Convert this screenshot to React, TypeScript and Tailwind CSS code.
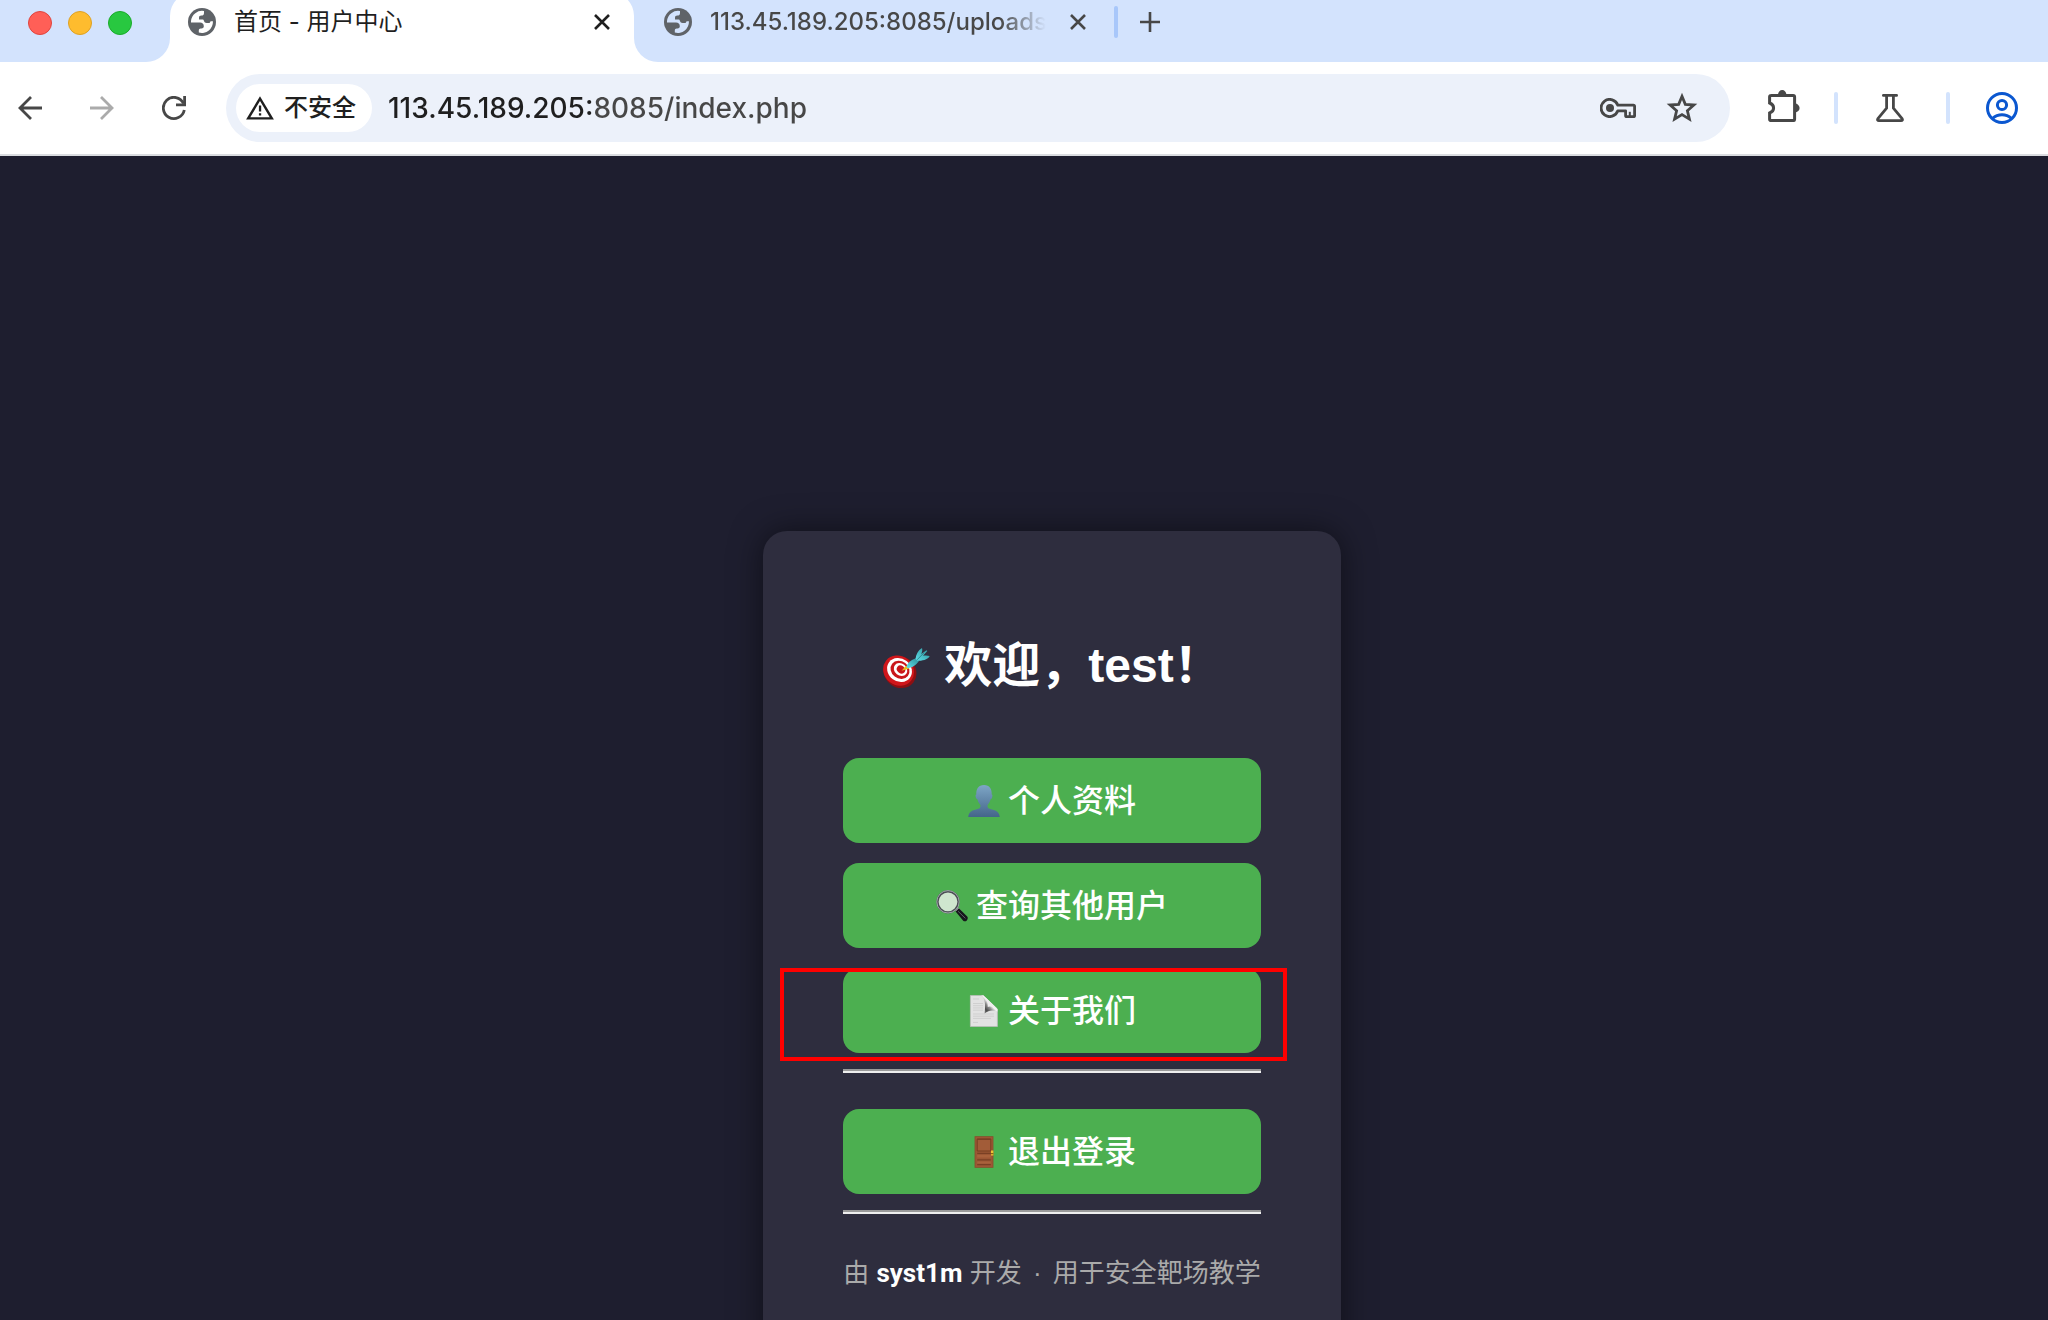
import type { ReactNode } from "react";

const Globe = () => (
  <svg viewBox="0 0 28 28" className="size-7 shrink-0" aria-hidden="true">
    <circle cx="14" cy="14" r="14" fill="#5f6368" />
    <path
      d="M3 13A11.1 11.1 0 0 1 16 3v2c0 1.8-1 2.6-2.600 2.600-1.600 0-2.400.8-2.400 2.300v1.600h3.500c1 0 1.300.6 1.500 1.500.3 1.300 1.200 2 2.600 2h2.200c1 0 1.500-1 1.800-1.800h2.300A11.1 11.1 0 0 1 10.800 24.600v-2.200c0-1.300.7-2 2-2h.8c1.400 0 2.200-.9 2.200-2.200 0-2.400-1.500-3.600-3.800-3.600H3z"
      fill="currentColor"
    />
  </svg>
);

const CloseIcon = () => (
  <svg viewBox="0 0 16 16" className="size-4" fill="none" stroke="currentColor" strokeWidth="2.600" aria-hidden="true">
    <path d="M1 1l14 14M15 1L1 15" />
  </svg>
);

const ArrowIcon = ({ flip }: { flip?: boolean }) => (
  <svg viewBox="0 0 24 24" className={flip ? "size-6 rotate-180" : "size-6"} fill="none" stroke="currentColor" strokeWidth="2.800" aria-hidden="true">
    <path d="M24 12H2M13 1L2 12l11 11" />
  </svg>
);

const ReloadIcon = () => (
  <svg viewBox="0 0 24 24" className="size-6" fill="none" stroke="currentColor" strokeWidth="2.800" aria-hidden="true">
    <path d="M22.300 14A10.600 10.600 0 1 1 21.500 7.400" />
    <path d="M22.600 0v8.800H14" />
  </svg>
);

const WarningIcon = () => (
  <svg viewBox="0 0 28 24" className="h-6 w-7" aria-hidden="true">
    <path d="M14 2.600L25.800 22.400H2.200z" fill="none" stroke="#1f1f1f" strokeWidth="2.400" />
    <path d="M12.900 9.500h2.300v6h-2.300zM12.900 17.300h2.300v2.300h-2.300z" fill="#1f1f1f" />
  </svg>
);

const KeyIcon = () => (
  <svg viewBox="0 0 36 20" className="h-5 w-9" fill="none" stroke="#474747" strokeWidth="2.800" aria-hidden="true">
    <path d="M17.800 7.200A8.600 8.600 0 1 0 17.800 12.800H25.600V17.400Q25.600 18.600 26.800 18.600H33.400Q34.600 18.600 34.600 17.400V8.400Q34.600 7.200 33.400 7.200z" strokeLinejoin="round" />
    <path d="M29.800 18v-4.200" strokeWidth="2" />
    <circle cx="10" cy="10" r="4" fill="#474747" stroke="none" />
  </svg>
);

const StarIcon = () => (
  <svg viewBox="0 0 32 32" className="size-8" fill="none" stroke="#474747" strokeWidth="2.800" aria-hidden="true">
    <path d="M16 4.300L19.300 12.300L27.900 13L21.400 18.700L23.400 27.100L16 22.600L8.600 27.100L10.600 18.700L4.100 13L12.700 12.300z" />
  </svg>
);

const PuzzleIcon = () => (
  <svg viewBox="0 0 32 32" className="size-8" aria-hidden="true">
    <path
      d="M3.400 5.400H25.200Q26.600 5.400 26.600 6.800V29.200Q26.600 30.600 25.200 30.600H3Q1.600 30.600 1.600 29.200V23Q5.600 21.600 5.600 18T1.600 13V6.800Q1.600 5.400 3.400 5.400z"
      fill="none"
      stroke="#474747"
      strokeWidth="3"
    />
    <path d="M10 5a4.200 5 0 0 1 8.400 0zM27 13.600a4.600 4.400 0 0 1 0 8.800z" fill="#474747" />
  </svg>
);

const FlaskIcon = () => (
  <svg viewBox="0 0 28 28" className="size-7" fill="none" stroke="#474747" strokeWidth="2.800" strokeLinecap="round" strokeLinejoin="round" aria-hidden="true">
    <path d="M7.400 1.400H20.600M10.600 1.600V14.200L1.900 24.600Q.8 26.600 3 26.600H25Q27.200 26.600 26.100 24.600L17.400 14.200V1.600" />
  </svg>
);

const ProfileIcon = () => (
  <svg viewBox="0 0 32 32" className="size-8" fill="none" stroke="#0b57d0" strokeWidth="3" aria-hidden="true">
    <circle cx="16" cy="16" r="14.500" />
    <circle cx="16" cy="13" r="4.600" />
    <path d="M6.600 26.400Q10.600 22.800 16 22.800T25.400 26.400" />
  </svg>
);

const TargetEmoji = () => (
  <svg viewBox="0 0 48 48" className="size-12" aria-hidden="true">
    <defs>
      <linearGradient id="dart" x1="0" y1="1" x2="1" y2="0">
        <stop offset="0" stopColor="#5fe0ea" />
        <stop offset="1" stopColor="#2b8f98" />
      </linearGradient>
    </defs>
    <ellipse cx="18" cy="30" rx="17" ry="15.500" transform="rotate(38 18 30)" fill="#8d0f12" />
    <ellipse cx="16.600" cy="28.600" rx="16" ry="14.500" transform="rotate(38 16.600 28.600)" fill="#d0161b" />
    <ellipse cx="17.500" cy="28" rx="13" ry="11.400" transform="rotate(38 17.500 28)" fill="#fff" />
    <ellipse cx="18" cy="27.800" rx="10" ry="8.600" transform="rotate(38 18 27.800)" fill="#c9161b" />
    <ellipse cx="18.500" cy="27.600" rx="7.200" ry="6" transform="rotate(38 18.500 27.600)" fill="#fff" />
    <ellipse cx="19" cy="27.500" rx="4.500" ry="3.700" transform="rotate(38 19 27.500)" fill="#c9161b" />
    <g transform="translate(0 5) scale(1 .83)">
      <path d="M19.500 28.500L24 22.500l3.500 3.500z" fill="#e9b81c" />
      <path d="M24.500 24C25 19.500 29 15.500 34 13.500l3 3.500C34.500 21.500 30.500 25 26 25.500z" fill="url(#dart)" />
      <path d="M33.500 14.500C34 9 36 4 40 1.200c.6 2.400.2 4.600-.8 7.200L44.500 4l.8.8L41 10.500c2.200-.6 4.600-.6 6.600.4-.6 3.200-6 6.200-12.100 5.700z" fill="url(#dart)" />
      <path d="M35 15.500L42 7" stroke="#1f7078" strokeWidth=".8" />
    </g>
  </svg>
);

const PersonEmoji = () => (
  <svg viewBox="0 0 32 32" className="size-8" aria-hidden="true">
    <defs>
      <linearGradient id="bust" x1="0" y1="0" x2="0" y2="1">
        <stop offset="0" stopColor="#7ea6c6" />
        <stop offset="1" stopColor="#44658a" />
      </linearGradient>
    </defs>
    <path
      d="M16 0C10.500 0 8 4 8.300 9.500c-1 .2-.8 1.600-.4 3 .3 1 .8 1.700 1.500 1.700.5 2.200 1.500 4 2.800 5.200.6 1.600.2 3.400-1.200 4.200C7.500 25.500 1 24.500.2 32h31.600c-.8-7.500-7.300-6.500-10.800-8.400-1.400-.8-1.800-2.600-1.200-4.200 1.300-1.200 2.300-3 2.800-5.200.7 0 1.200-.7 1.500-1.700.4-1.400.6-2.800-.4-3C24 4 21.500 0 16 0z"
      fill="url(#bust)"
    />
  </svg>
);

const SearchEmoji = () => (
  <svg viewBox="0 0 32 32" className="size-8" aria-hidden="true">
    <path d="M18.800 19.500L21.500 17l4 4-2.800 2.800z" fill="#b5b9bd" />
    <path d="M19.600 21.400l3.300-3.100L31.200 26.500c1 1.200.6 2.800-.4 3.900s-2.600 1.300-3.600.3z" fill="#17181c" />
    <path d="M22 21.200l7.400 7.200" stroke="#5c5f66" strokeWidth="1" />
    <circle cx="12" cy="11.800" r="10.500" fill="#cfe6cf" stroke="#4b4e54" strokeWidth="2.200" />
    <circle cx="12" cy="11.800" r="11.200" fill="none" stroke="#b4babf" strokeWidth=".8" />
  </svg>
);

const PageEmoji = () => (
  <svg viewBox="0 0 32 32" className="size-8" aria-hidden="true">
    <defs>
      <linearGradient id="curl" x1="0" y1="1" x2="1" y2="0">
        <stop offset="0" stopColor="#a6a6a6" />
        <stop offset=".26" stopColor="#4a4a4a" />
        <stop offset=".42" stopColor="#8f8f8f" />
        <stop offset=".54" stopColor="#f4f4f4" />
      </linearGradient>
    </defs>
    <path d="M2.400.4h13L29.400 14v17.600h-27z" fill="#e2e2e2" stroke="#bdbdbd" strokeWidth=".8" />
    <path d="M5 4h6M5 8.500h10M5 10.700h10M5 12.900h10M5 15.100h10M5 19h21M5 21.200h21M5 23.400h18M5 27.400h5" stroke="#cfcfcf" strokeWidth="1" />
    <path d="M13 .4C17.400 3.500 17.600 9.500 16.600 18.400c4-3.600 8.800-3.600 12.800-1.800V14L15.400.4z" fill="url(#curl)" />
    <path d="M16.200 1.200L28.600 13.200C25.600 11.600 22.600 11.200 19.800 12 19.800 8 18.800 4 16.200 1.200z" fill="#eeeeee" />
  </svg>
);

const DoorEmoji = () => (
  <svg viewBox="0 0 32 32" className="size-8" aria-hidden="true">
    <path d="M6.600.2h18.800v31.600H6.600z" fill="#8a4b2b" />
    <path d="M7.400 1h17.200v30H7.400z" fill="#9c5734" />
    <path d="M9.200 3h13.600v12H9.200z" fill="#a25c38" stroke="#6d371d" strokeWidth=".8" />
    <path d="M9.200 3.400h13.600M9.200 17.400h13.600M9.200 23.800h13.600M9.200 28.600h13.600" stroke="#7a4024" strokeWidth="1.200" />
    <path d="M9.200 19h13.600v2.600H9.200zM9.200 25.400h13.600v2.200H9.200z" fill="#a9623c" />
    <path d="M23 14.500h2.400v5H23z" fill="#f1c232" />
    <path d="M23 17h2.400v1.200H23z" fill="#8a6412" />
  </svg>
);

const MenuLink = ({ href, icon, children }: { href: string; icon: ReactNode; children: ReactNode }) => (
  <a href={href} className="flex h-[85px] items-center justify-center gap-2 rounded-2xl bg-[#4caf50] text-[32px] leading-none font-medium text-white">
    {icon}
    <span>{children}</span>
  </a>
);

const Rule = () => <hr className="h-1 border-t-2 border-b-2 border-t-[#9a9a9a] border-b-[#eeeeee]" />;

const TabStrip = () => (
  <div className="flex h-[62px] shrink-0 overflow-hidden bg-white text-2xl leading-8 text-[#474747]">
    <div className="flex w-[170px] shrink-0 gap-4 rounded-br-3xl bg-[#d3e3fd] pt-[11px] pl-7">
      <button aria-label="关闭" className="size-6 rounded-full border border-[#e0443e] bg-[#ff5f57]" />
      <button aria-label="最小化" className="size-6 rounded-full border border-[#dea123] bg-[#febc2e]" />
      <button aria-label="缩放" className="size-6 rounded-full border border-[#1aab29] bg-[#28c840]" />
    </div>
    <div className="w-[464px] shrink-0 bg-[linear-gradient(#d3e3fd_24px,#ffffff_24px)]">
      <div className="-mt-2 flex h-[70px] items-center rounded-t-3xl bg-white pr-6 pb-[10px] pl-[18px] text-[#1f1f1f]">
        <span className="text-white">
          <Globe />
        </span>
        <span className="ml-[18px] flex-1">首页 - 用户中心</span>
        <button aria-label="关闭标签页">
          <CloseIcon />
        </button>
      </div>
    </div>
    <div className="flex flex-1 items-start rounded-bl-3xl bg-[#d3e3fd] pt-[6px] pl-[30px]">
      <div className="flex h-8 items-center">
        <span className="text-[#d3e3fd]">
          <Globe />
        </span>
        <span className="ml-[18px] w-[336px] bg-[linear-gradient(90deg,#474747_290px,transparent)] bg-clip-text font-medium whitespace-nowrap text-transparent">
          113.45.189.205:8085/uploads
        </span>
        <button aria-label="关闭标签页" className="ml-6">
          <CloseIcon />
        </button>
        <span className="ml-7 h-8 w-1 rounded-full bg-[#a8c7fa]" />
        <button aria-label="新标签页" className="ml-[22px]">
          <svg viewBox="0 0 20 20" className="size-5" fill="none" stroke="currentColor" strokeWidth="2.600" aria-hidden="true">
            <path d="M10 0v20M0 10h20" />
          </svg>
        </button>
      </div>
    </div>
  </div>
);

const Toolbar = () => (
  <div className="flex h-[94px] shrink-0 items-center border-b-2 border-[#dadce0] bg-white pr-[30px] pl-[18px] text-[#474747]">
    <button aria-label="后退">
      <ArrowIcon />
    </button>
    <button aria-label="前进" className="ml-12 text-[#ababab]">
      <ArrowIcon flip />
    </button>
    <button aria-label="重新加载" className="ml-12">
      <ReloadIcon />
    </button>
    <div className="ml-10 flex h-[68px] flex-1 items-center rounded-full bg-[#ecf1fa] pr-8 pl-[10px]">
      <button className="flex h-12 items-center gap-[10px] rounded-full bg-white pr-4 pl-[10px] text-2xl font-medium text-[#1f1f1f]">
        <WarningIcon />
        不安全
      </button>
      <input
        type="text"
        aria-label="地址"
        defaultValue="113.45.189.205:8085/index.php"
        className="ml-4 min-w-0 flex-1 bg-[linear-gradient(90deg,#1f1f1f_204px,#474747_204px)] bg-clip-text text-[28px] leading-10 font-medium text-transparent outline-none"
      />
      <button aria-label="密码">
        <KeyIcon />
      </button>
      <button aria-label="添加书签" className="ml-[30px]">
        <StarIcon />
      </button>
    </div>
    <button aria-label="扩展程序" className="ml-[38px] -mt-1">
      <PuzzleIcon />
    </button>
    <span className="ml-[34px] h-8 w-1 rounded-full bg-[#d3e3fd]" />
    <button aria-label="实验" className="ml-[38px]">
      <FlaskIcon />
    </button>
    <span className="ml-[42px] h-8 w-1 rounded-full bg-[#d3e3fd]" />
    <button aria-label="个人资料" className="ml-9">
      <ProfileIcon />
    </button>
  </div>
);

const App = () => {
  return (
    <div lang="zh-CN" className="flex h-screen flex-col overflow-hidden bg-[#1e1e2f] font-[Inter,'Noto_Sans_CJK_SC',sans-serif]">
      <TabStrip />
      <Toolbar />
      <main className="flex flex-1 items-start justify-center overflow-hidden pt-[375px] pl-14 font-['Liberation_Sans','Noto_Sans_CJK_SC',sans-serif]">
        <div className="w-[578px] shrink-0 rounded-3xl bg-[#2e2d3e] px-20 pt-[100px] pb-20 shadow-[0_0_32px_rgba(0,0,0,0.5)]">
          <h1 className="flex items-center justify-center gap-[14px] text-5xl leading-[70px] font-bold whitespace-nowrap text-white">
            <TargetEmoji />
            <span>欢迎，test！</span>
          </h1>
          <nav className="mt-[57px] flex flex-col gap-5">
            <MenuLink href="#profile" icon={<PersonEmoji />}>
              个人资料
            </MenuLink>
            <MenuLink href="#search" icon={<SearchEmoji />}>
              查询其他用户
            </MenuLink>
            <div className="relative">
              <MenuLink href="#about" icon={<PageEmoji />}>
                关于我们
              </MenuLink>
              <div className="pointer-events-none absolute -inset-x-[63px] top-0 -bottom-2 mr-[37px] border-4 border-[#ff0000]" />
            </div>
          </nav>
          <div className="mt-4 flex flex-col">
            <Rule />
            <div className="mt-9 mb-4">
              <MenuLink href="#logout" icon={<DoorEmoji />}>
                退出登录
              </MenuLink>
            </div>
            <Rule />
          </div>
          <p className="mt-10 text-center text-[26px] leading-[38px] whitespace-nowrap text-[#aaaaaa]">
            由 <strong className="font-[Roboto,sans-serif] text-white">syst1m</strong> 开发 <span className="mx-1">·</span> 用于安全靶场教学
          </p>
        </div>
      </main>
    </div>
  );
};

export default App;
